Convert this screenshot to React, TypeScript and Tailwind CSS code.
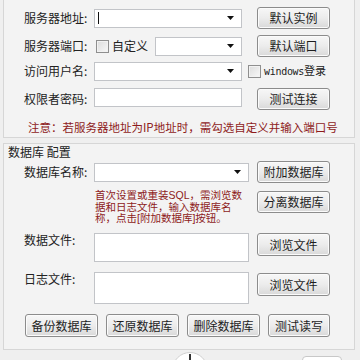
import React from 'react';

const font = "font-['Noto_Sans_CJK_SC','Microsoft_YaHei',sans-serif]";

const Btn: React.FC<{ label: string; w?: string; h?: string; cls?: string }> = ({ label, w = 'w-[73px]', h = 'h-[22px]', cls = '' }) => (
  <button
    className={`${w} ${h} ${cls} shrink-0 flex items-center justify-center rounded-[3px] border border-[#8c8c8c] bg-gradient-to-b from-[#f7f7f7] via-[#ececec] to-[#d9d9d9] shadow-[inset_0_0_0_1px_#fbfbfb] text-[12px] leading-none text-[#1e1e1e]`}
  >
    {label}
  </button>
);

const Arrow = () => (
  <svg width="7" height="4" viewBox="0 0 7 4" className="shrink-0">
    <path d="M0 0h7L3.5 4z" fill="#111" />
  </svg>
);

const Combo: React.FC<{ w: string; h?: string; cls?: string; caret?: boolean }> = ({ w, h = 'h-[19px]', cls = '', caret }) => (
  <div className={`${w} ${h} ${cls} shrink-0 flex items-center justify-end border border-[#c2c4c8] bg-white pr-[7px]`}>
    {caret && <span className="mr-auto ml-[3px] w-px h-[12px] bg-[#111]" />}
    <Arrow />
  </div>
);

const Box: React.FC<{ w: string; h: string; cls?: string }> = ({ w, h, cls = '' }) => (
  <div className={`${w} ${h} ${cls} shrink-0 border border-[#c2c4c8] bg-white`} />
);

const Check: React.FC<{ cls?: string }> = ({ cls = '' }) => (
  <span className={`${cls} w-[13px] h-[13px] shrink-0 border border-[#8f8f8f] bg-gradient-to-br from-[#dcdcdc] to-[#f8f8f8] shadow-[inset_0_0_0_1px_#f2f2f2]`} />
);

const Label: React.FC<{ text: string; cls?: string }> = ({ text, cls = '' }) => (
  <span className={`w-[70px] shrink-0 leading-[14px] whitespace-nowrap ${cls}`}>{text}</span>
);

export default function App() {
  return (
    <div className={`w-[360px] h-[360px] overflow-hidden bg-[#efefef] text-[12px] text-[#222] ${font}`}>
      {/* 服务器 */}
      <div className="mx-[3px] w-[352px] h-[138px] flex flex-col border-x border-b border-[#d6d6d6] bg-[#f3f3f3] pl-[20px]">
        <div className="mt-[7px] h-[22px] flex items-center">
          <Label text="服务器地址:" />
          <Combo w="w-[148px]" caret />
          <Btn label="默认实例" cls="ml-[15px]" />
        </div>
        <div className="mt-[6px] h-[22px] flex items-center">
          <Label text="服务器端口:" />
          <div className="w-[148px] flex items-center">
            <Check cls="ml-[2px]" />
            <span className="ml-[3px] leading-[14px]">自定义</span>
            <Combo w="w-[87px]" cls="ml-auto" />
          </div>
          <Btn label="默认端口" cls="ml-[15px]" />
        </div>
        <div className="mt-[3px] h-[22px] flex items-center">
          <Label text="访问用户名:" />
          <Combo w="w-[148px]" />
          <Check cls="ml-[6px]" />
          <span className="ml-[3px] leading-[14px] text-[11px] whitespace-nowrap">
            <span className="font-['DejaVu_Sans_Mono',monospace] text-[10px] tracking-[-0.3px]">windows</span>登录
          </span>
        </div>
        <div className="mt-[6px] h-[22px] flex items-center">
          <Label text="权限者密码:" />
          <Box w="w-[148px]" h="h-[19px]" cls="self-start" />
          <Btn label="测试连接" cls="ml-[15px]" />
        </div>
        <p className="mt-[10px] pl-[4px] text-[11.5px] leading-[14px] text-[#8e1b1b] whitespace-nowrap">
          注意：若服务器地址为IP地址时，需勾选自定义并输入端口号
        </p>
      </div>

      {/* 数据库 配置 */}
      <div className="mx-[3px] mt-[5px] w-[352px] h-[207px] flex flex-col border border-[#d6d6d6] bg-[#f3f3f3]">
        <span className="mt-[1px] pl-[4px] leading-[14px]">数据库 配置</span>
        <div className="mt-[2px] pl-[20px] h-[22px] flex items-center">
          <Label text="数据库名称:" />
          <Combo w="w-[155px]" />
          <Btn label="附加数据库" cls="ml-[8px]" />
        </div>
        <div className="mt-[8px] pl-[20px] h-[34px] flex items-start">
          <span className="w-[70px] shrink-0" />
          <p className="w-[155px] -mt-[1px] pl-[1px] font-['Liberation_Sans','Noto_Sans_CJK_SC',sans-serif] text-[10.5px] leading-[11.5px] text-[#8e1b1b] whitespace-nowrap">
            首次设置或重装SQL，需浏览数
            <br />
            据和日志文件，输入数据库名
            <br />
            称，点击[附加数据库]按钮。
          </p>
          <Btn label="分离数据库" cls="ml-[8px]" />
        </div>
        <div className="mt-[8px] pl-[20px] flex items-start">
          <Label text="数据文件:" />
          <Box w="w-[155px]" h="h-[29px]" />
          <Btn label="浏览文件" h="h-[23px]" cls="ml-[8px]" />
        </div>
        <div className="mt-[10px] pl-[20px] flex items-start">
          <Label text="日志文件:" />
          <Box w="w-[155px]" h="h-[32px]" />
          <Btn label="浏览文件" h="h-[23px]" cls="ml-[8px] mt-[1px]" />
        </div>
        <div className="mt-[10px] pl-[21px] flex gap-[8px]">
          <Btn label="备份数据库" h="h-[23px]" />
          <Btn label="还原数据库" h="h-[23px]" />
          <Btn label="删除数据库" h="h-[23px]" />
          <Btn label="测试读写" w="w-[62px]" h="h-[23px]" />
        </div>
      </div>

      {/* 底部 */}
      <div className="flex items-start">
        <div className="ml-[172px] mt-[2px] w-[36px] h-[36px] rounded-full border border-[#d0d0d0] bg-white flex justify-center">
          <span className="mt-[1px] w-[2px] h-[8px] bg-[#333]" />
        </div>
        <div className="ml-[94px] mt-[6px] w-[40px] h-[14px] rounded-[4px] border border-[#c8c8c8] bg-white" />
      </div>
    </div>
  );
}
